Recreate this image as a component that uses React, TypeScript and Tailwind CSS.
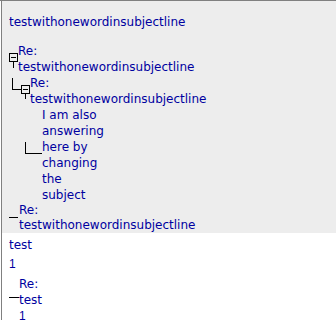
import React from "react";

const SUBJ = "testwithonewordinsubjectline";

function Expander({ tail }: { tail: "a" | "b" }) {
  return (
    <div className="flex w-[9px] shrink-0 flex-col items-center">
      <div className="h-[10px]" />
      <div className="flex h-[9px] w-[9px] items-center justify-center border border-black">
        <div className="h-px w-[5px] bg-black" />
      </div>
      <div className={tail === "a" ? "h-[6px] w-px bg-black" : "h-[5px] w-px bg-black"} />
    </div>
  );
}

function BodyLine({ text, conn }: { text: string; conn?: boolean }) {
  return (
    <div className="flex h-4 pl-[23px]">
      <div className="w-[17px] shrink-0">
        {conn ? <div className="mt-[3px] h-[12px] w-[17px] border-b border-l border-black" /> : null}
      </div>
      <div className="h-4 whitespace-nowrap">{text}</div>
    </div>
  );
}

export default function App() {
  return (
    <div className="h-[320px] w-[336px] overflow-hidden border-t border-[#808080] bg-white font-['DejaVu_Sans',sans-serif] text-[12px] leading-4 text-[#0000a0]">
      <div className="ml-px h-full border-l border-[#808080]">
        <div className="h-[232px] bg-[#ededed] pt-[13px]">
          <div className="h-4 whitespace-nowrap pl-[7px]">{SUBJ}</div>

          <div className="mt-[13px] flex pl-[7px]">
            <Expander tail="a" />
            <div>
              <div className="h-4">Re:</div>
              <div className="h-4 whitespace-nowrap">{SUBJ}</div>
            </div>
          </div>

          <div className="flex pl-[10px]">
            <div className="mt-[3px] h-[12px] w-[9px] shrink-0 border-b border-l border-black" />
            <Expander tail="b" />
            <div>
              <div className="h-4">Re:</div>
              <div className="h-4 whitespace-nowrap">{SUBJ}</div>
            </div>
          </div>

          <BodyLine text="I am also" />
          <BodyLine text="answering" />
          <BodyLine text="here by" conn />
          <BodyLine text="changing" />
          <BodyLine text="the" />
          <BodyLine text="subject" />

          <div className="flex pl-[7px]">
            <div className="h-[15px] w-[9px] shrink-0 border-b border-black" />
            <div className="pl-px">
              <div className="h-[15px] leading-[15px]">Re:</div>
              <div className="h-[15px] whitespace-nowrap leading-[15px]">{SUBJ}</div>
            </div>
          </div>
        </div>

        <div className="mt-[4px] pl-[7px]">
          <div className="h-4">test</div>
          <div className="mt-[3px] h-4 font-['Liberation_Sans',sans-serif]">1</div>
        </div>

        <div className="mt-[4px] flex pl-[7px]">
          <div className="mt-4 h-[6px] w-[10px] shrink-0 border-b border-black" />
          <div>
            <div className="h-4">Re:</div>
            <div className="h-4">test</div>
            <div className="h-4 font-['Liberation_Sans',sans-serif]">1</div>
          </div>
        </div>
      </div>
    </div>
  );
}
